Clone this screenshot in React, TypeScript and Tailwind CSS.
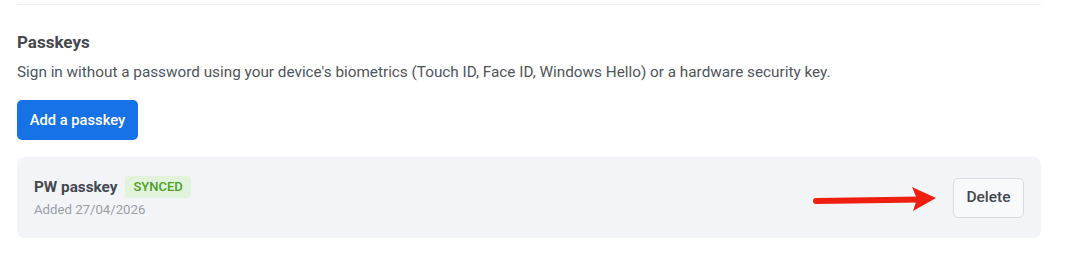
export default function App() {
  return (
    <div className="min-h-screen bg-white font-['Roboto','Liberation_Sans',sans-serif]">
      <div className="pl-[17px] pr-[25px] pt-[4px]">
        <div className="border-t border-[#eceef2] pt-[24px]">
          <h2 className="text-[17px] leading-[26px] font-bold text-[#45484e]">Passkeys</h2>
          <p className="mt-[7px] text-[15.3px] leading-[20px] text-[#50545b]">
            Sign in without a password using your device's biometrics (Touch ID, Face ID, Windows Hello) or a hardware security key.
          </p>
          <button className="mt-[18px] h-[40px] w-[121px] rounded-[5px] bg-[#1672e6] text-[14.7px] font-medium text-white">
            Add a passkey
          </button>
          <div className="mt-[17px] flex h-[81px] items-center justify-between rounded-[8px] bg-[#f3f4f8] pl-[17px] pr-[17px]">
            <div className="flex flex-col">
              <div className="flex items-center gap-[8px]">
                <span className="text-[15.3px] leading-[22px] font-bold text-[#45484e]">PW passkey</span>
                <span className="rounded-[4px] bg-[#e2f3dc] px-[8px] py-[2px] text-[13px] leading-[18px] font-medium text-[#4d9e24]">
                  SYNCED
                </span>
              </div>
              <span className="mt-[3px] text-[13.2px] leading-[18px] text-[#9a9da4]">Added 27/04/2026</span>
            </div>
            <div className="flex items-center gap-[14px]">
              <svg width="126" height="28" viewBox="0 0 126 28" className="mt-[4px]">
                <line x1="3" y1="15" x2="108" y2="13.5" stroke="#ee1f10" strokeWidth="6" strokeLinecap="round" />
                <path d="M99 1 L123 12 L100 25 L104 13 Z" fill="#ee1f10" />
              </svg>
              <button className="h-[40px] w-[71px] rounded-[5px] border border-[#d8dbe1] bg-[#f8f9fb] text-[15.5px] font-medium text-[#45484e]">
                Delete
              </button>
            </div>
          </div>
        </div>
      </div>
    </div>
  );
}
